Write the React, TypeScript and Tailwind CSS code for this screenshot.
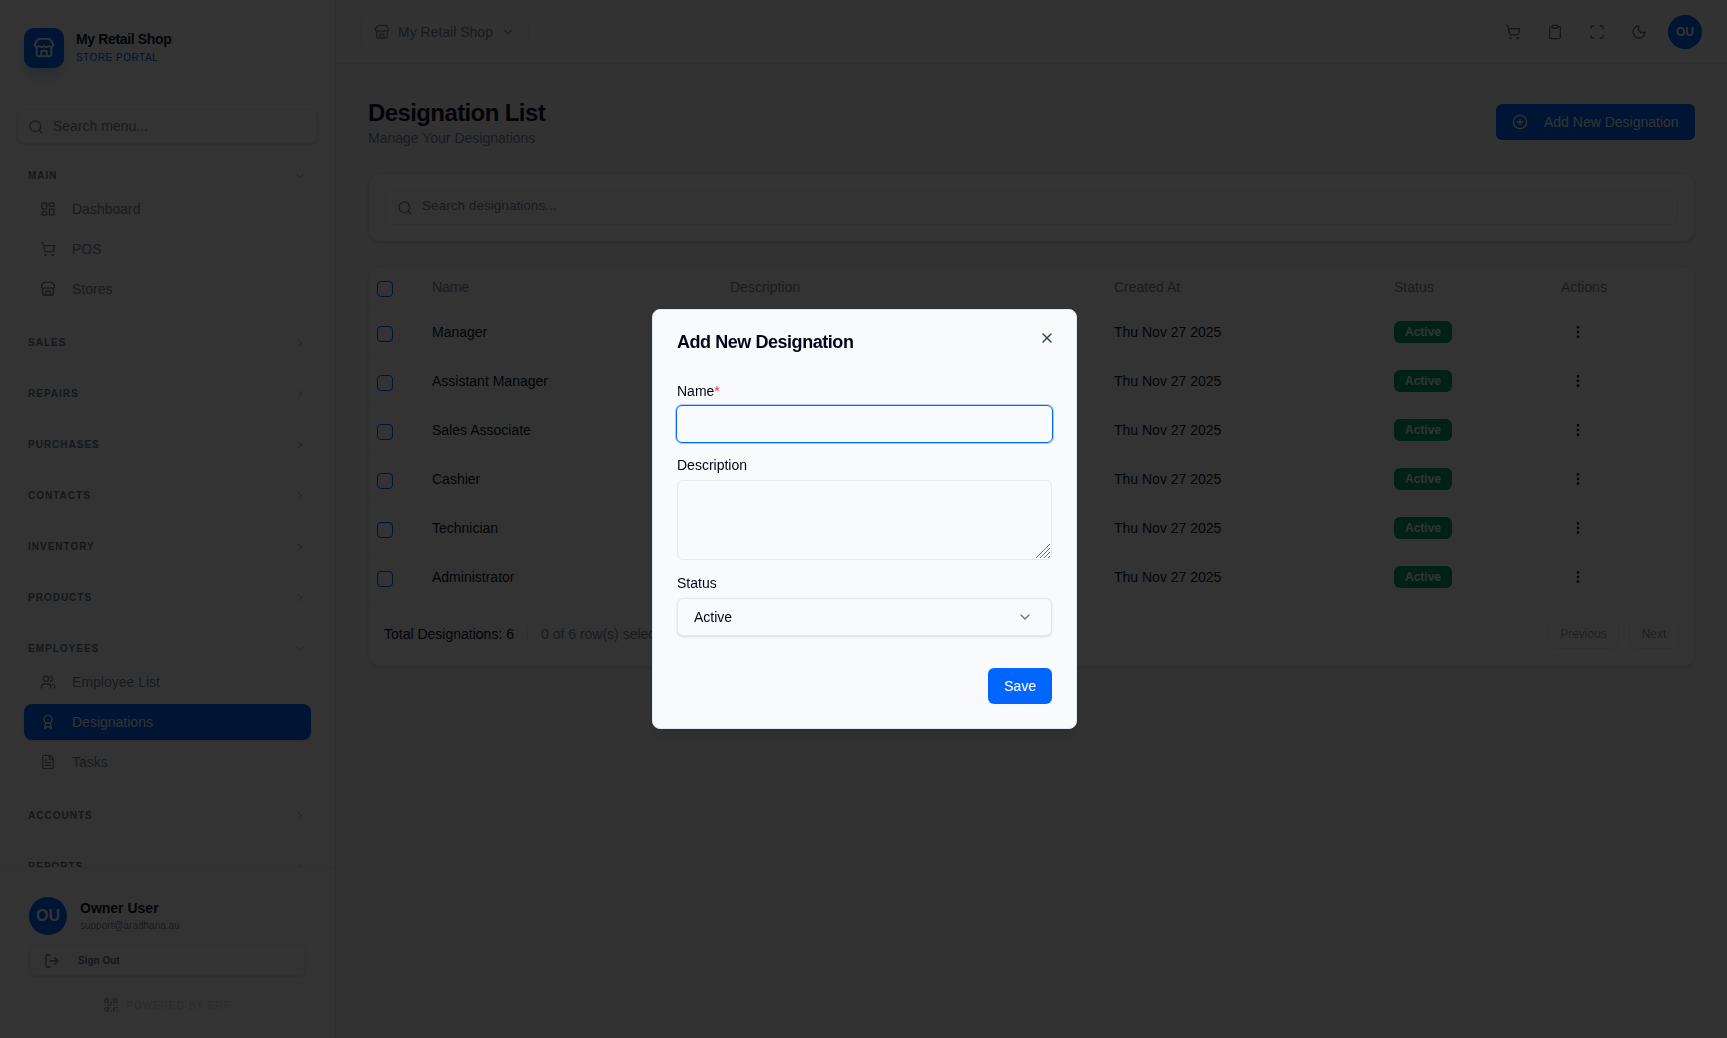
import {
  Award,
  ChevronDown,
  ChevronRight,
  CirclePlus,
  Clipboard,
  EllipsisVertical,
  FileText,
  LayoutDashboard,
  LogOut,
  Moon,
  QrCode,
  Scan,
  Search,
  ShoppingCart,
  Store,
  Users,
  X,
} from 'lucide-react'
import type { ReactNode } from 'react'

const designations = ['Manager', 'Assistant Manager', 'Sales Associate', 'Cashier', 'Technician', 'Administrator']

const SectionLabel = ({ label, open }: { label: string; open?: boolean }) => (
  <div className="flex h-5 items-center justify-between pl-[28px] pr-[29px]">
    <span className="mb-[2px] text-[10px] font-bold tracking-widest text-[#64748b]">{label}</span>
    {open ? <ChevronDown size={12} className="text-slate-400" /> : <ChevronRight size={12} className="text-slate-400" />}
  </div>
)

const NavItem = ({ icon, label, active }: { icon: ReactNode; label: string; active?: boolean }) => (
  <div
    className={`flex h-9 items-center gap-[16px] rounded-lg pl-[16px] text-sm ${
      active ? 'bg-[#0066ff] text-white shadow-sm' : 'text-[#7c8799]'
    }`}
  >
    {icon}
    <span>{label}</span>
  </div>
)

const Collapsed = ({ label }: { label: string }) => (
  <div className="mb-[31px]">
    <SectionLabel label={label} />
  </div>
)

const Sidebar = () => (
  <aside className="flex h-full w-[336px] shrink-0 flex-col border-r border-slate-200 bg-white">
    <div className="flex items-center gap-3 pl-[24px] pt-[28px]">
      <div className="flex h-10 w-10 items-center justify-center rounded-[10px] bg-[#0066ff] text-white shadow-lg shadow-blue-200">
        <Store size={22} />
      </div>
      <div className="pb-[2px]">
        <div className="text-sm leading-[20px] font-bold tracking-tight text-slate-900">My Retail Shop</div>
        <div className="mt-[2px] text-[10px] leading-[14px] tracking-wider text-[#0066ff]">STORE PORTAL</div>
      </div>
    </div>

    <div className="mx-[17px] mt-[41px] flex h-[35px] items-center gap-[9px] rounded-lg border border-[#e8edf4] bg-white pl-[10px] text-sm text-[#7c8799] shadow-sm">
      <Search size={16} />
      <span className="mb-[2px]">Search menu...</span>
    </div>

    <nav className="mt-[22px] min-h-0 flex-1 overflow-hidden">
      <div className="mb-[26px]">
        <SectionLabel label="MAIN" open />
        <div className="mx-[24px] mt-[5px] flex flex-col gap-1">
          <NavItem icon={<LayoutDashboard size={16} />} label="Dashboard" />
          <NavItem icon={<ShoppingCart size={16} />} label="POS" />
          <NavItem icon={<Store size={16} />} label="Stores" />
        </div>
      </div>
      <Collapsed label="SALES" />
      <Collapsed label="REPAIRS" />
      <Collapsed label="PURCHASES" />
      <Collapsed label="CONTACTS" />
      <Collapsed label="INVENTORY" />
      <Collapsed label="PRODUCTS" />
      <div className="mb-[26px]">
        <SectionLabel label="EMPLOYEES" open />
        <div className="mx-[24px] mt-[5px] flex flex-col gap-1">
          <NavItem icon={<Users size={16} />} label="Employee List" />
          <NavItem icon={<Award size={16} />} label="Designations" active />
          <NavItem icon={<FileText size={16} />} label="Tasks" />
        </div>
      </div>
      <Collapsed label="ACCOUNTS" />
      <Collapsed label="REPORTS" />
    </nav>

    <div className="h-[171px] shrink-0 border-t border-slate-200 px-[17px] pt-[14px]">
      <div className="rounded-xl border border-slate-100 px-[11px] pb-[9px] pt-[14px]">
        <div className="flex items-center gap-[13px]">
          <div className="flex h-[38px] w-[38px] items-center justify-center rounded-full bg-[#0066ff] text-base font-bold text-white">
            OU
          </div>
          <div>
            <div className="text-sm leading-[18px] font-bold text-slate-900">Owner User</div>
            <div className="mt-[2px] text-[10px] leading-[14px] text-[#7c8799]">support@aradhana.au</div>
          </div>
        </div>
        <div className="mt-[10px] flex h-[31px] items-center gap-[18px] rounded-lg border border-[#e8edf4] pl-[14px] text-[10px] font-bold text-[#64748b] shadow-sm">
          <LogOut size={16} />
          <span>Sign Out</span>
        </div>
      </div>
      <div className="mt-[11px] flex items-center justify-center gap-[7px] pr-[1px] text-[10px] tracking-widest text-slate-300">
        <QrCode size={16} className="text-slate-400" />
        <span>POWERED BY ERF</span>
      </div>
    </div>
  </aside>
)

const Header = () => (
  <header className="flex h-16 shrink-0 items-center justify-between border-b border-slate-200 pl-6 pr-[25px]">
    <div className="flex h-9 w-[169px] items-center rounded-lg border border-[#e8edf4] pl-[13px] text-sm text-[#7c8799]">
      <Store size={16} />
      <span className="ml-[8px]">My Retail Shop</span>
      <ChevronDown size={14} className="ml-[8px]" />
    </div>
    <div className="flex items-center text-[#64748b]">
      <ShoppingCart size={16} className="mr-[26px]" />
      <Clipboard size={16} className="mr-[26px]" />
      <Scan size={16} className="mr-[26px]" />
      <Moon size={16} className="mr-[21px]" />
      <div className="flex h-[34px] w-[34px] items-center justify-center rounded-full bg-[#0066ff] text-xs font-bold text-white">
        OU
      </div>
    </div>
  </header>
)

const Checkbox = () => <span className="mt-1 block h-4 w-4 rounded-[4px] border border-[#0066ff]" />

const DesignationTable = () => (
  <div className="mt-6 rounded-xl border border-[#e8edf4] bg-white shadow-sm">
    <table className="w-full table-fixed border-b border-slate-100 text-sm">
      <thead>
        <tr className="h-10 border-b border-slate-100 text-left text-[#7c8799]">
          <th className="w-[47px] pl-[8px] font-normal">
            <Checkbox />
          </th>
          <th className="w-[298px] pl-4 font-normal">Name</th>
          <th className="w-[384px] pl-4 font-normal">Description</th>
          <th className="w-[280px] pl-4 font-normal">Created At</th>
          <th className="w-[167px] pl-4 font-normal">Status</th>
          <th className="pl-4 font-normal">Actions</th>
        </tr>
      </thead>
      <tbody className="text-slate-900">
        {designations.map((name, i) => (
          <tr key={name} className={`h-[49px] ${i < designations.length - 1 ? 'border-b border-slate-100' : ''}`}>
            <td className="pl-[8px]">
              <Checkbox />
            </td>
            <td className="pl-4">{name}</td>
            <td className="pl-4" />
            <td className="pl-4">Thu Nov 27 2025</td>
            <td className="pl-4">
              <span className="inline-flex h-[22px] w-[58px] items-center justify-center rounded-md bg-[#00a76f] text-xs font-bold text-white">
                Active
              </span>
            </td>
            <td className="pl-[25px]">
              <EllipsisVertical size={16} />
            </td>
          </tr>
        ))}
      </tbody>
    </table>
    <div className="flex h-[64px] items-center justify-between pl-[15px] pr-[15px] text-sm">
      <div className="flex items-center">
        <span className="text-slate-900">Total Designations: 6</span>
        <span className="mx-[13px] h-4 w-px bg-slate-200" />
        <span className="text-[#7c8799]">0 of 6 row(s) selected</span>
      </div>
      <div className="flex items-center gap-[10px] text-xs text-slate-400">
        <span className="flex h-[30px] w-[71px] items-center justify-center rounded-md border border-[#e8edf4]">Previous</span>
        <span className="flex h-[30px] w-[50px] items-center justify-center rounded-md border border-[#e8edf4]">Next</span>
      </div>
    </div>
  </div>
)

const AddDialog = () => (
  <div className="fixed inset-0 z-50 flex items-center justify-center bg-black/80 pl-[2px]">
    <div className="relative w-[425px] rounded-lg border border-slate-200 bg-[#f8fafc] px-6 pb-6 pt-[18px] shadow-lg">
      <button className="absolute right-[21px] top-[20px] text-slate-700">
        <X size={16} />
      </button>
      <h2 className="text-lg leading-7 font-bold tracking-tight text-slate-950">Add New Designation</h2>

      <label className="mt-[25px] block text-sm leading-5 text-slate-950">
        Name<span className="text-red-500">*</span>
      </label>
      <input className="-mx-px mt-1 block h-[38px] w-[377px] rounded-md border border-[#0066ff] bg-transparent ring-1 ring-[#0066ff]/30 outline-none" />

      <label className="mt-3 block text-sm leading-5 text-slate-950">Description</label>
      <div className="relative mt-[5px]">
        <textarea className="block h-20 w-full resize-none rounded-md border border-slate-200 bg-transparent outline-none" />
        {/* resize grip */}
        <svg viewBox="0 0 14 14" className="absolute bottom-[2px] right-[2px] h-[14px] w-[14px] text-gray-500" stroke="currentColor" strokeWidth="1">
          <path d="M0 14L14 0M4 14L14 4M8 14L14 8M12 14L14 12" />
        </svg>
      </div>

      <label className="mt-[13px] block text-sm leading-5 text-slate-950">Status</label>
      <div className="mt-[5px] flex h-[38px] items-center justify-between rounded-md border border-slate-200 bg-[#f8fafc] pl-[16px] pr-[18px] text-sm text-slate-950 shadow">
        <span>Active</span>
        <ChevronDown size={16} className="text-slate-500" />
      </div>

      <div className="mt-8 flex justify-end">
        <button className="h-9 w-16 rounded-md bg-[#0066ff] text-sm text-white">Save</button>
      </div>
    </div>
  </div>
)

const App = () => (
  <div className="flex h-[1038px] overflow-hidden bg-[#f8fafc] font-['Liberation_Sans',Arial,sans-serif]">
    <Sidebar />
    <main className="flex min-w-0 flex-1 flex-col">
      <Header />
      <div className="px-8 pt-8">
        <div className="mb-[25px] flex items-center justify-between">
          <div>
            <h1 className="mt-[2px] text-2xl leading-[30px] font-bold tracking-tight text-slate-900">Designation List</h1>
            <p className="text-sm text-[#7c8799]">Manage Your Designations</p>
          </div>
          <button className="flex h-9 w-[199px] items-center gap-[16px] rounded-md bg-[#0066ff] pl-[16px] text-sm text-white">
            <CirclePlus size={16} />
            Add New Designation
          </button>
        </div>

        <div className="rounded-xl border border-slate-200 bg-white p-4 shadow-sm">
          <div className="flex h-[35px] items-center gap-[9px] rounded-md border border-[#e8edf4] pl-[11px] text-[13.6px] text-[#7c8799]">
            <Search size={16} />
            <span className="mb-[2px]">Search designations...</span>
          </div>
        </div>

        <DesignationTable />
      </div>
    </main>
    <AddDialog />
  </div>
)

export default App
